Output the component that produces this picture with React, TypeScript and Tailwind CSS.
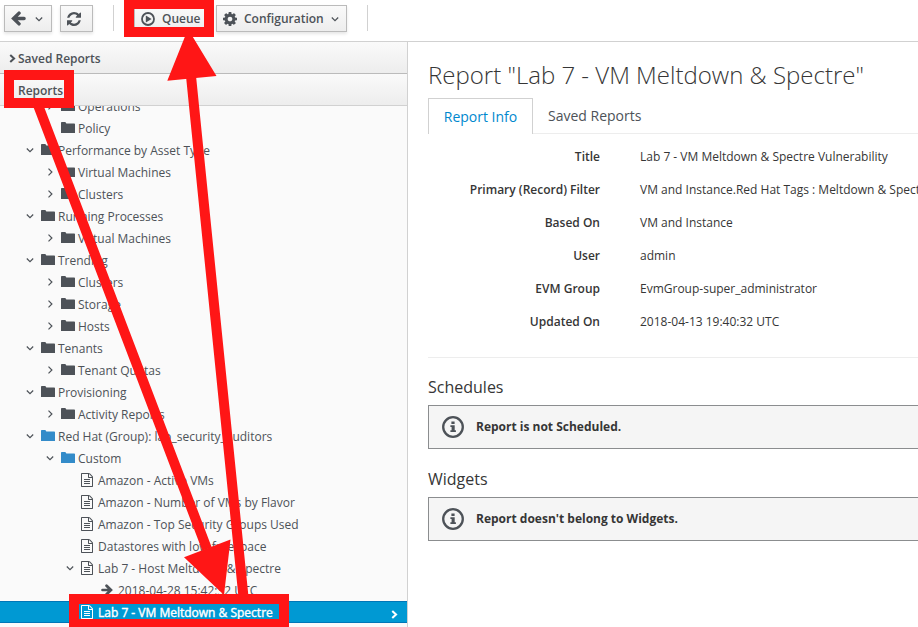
import React from "react";

type IconProps = { className?: string };

const ArrowIcon = ({ className = "" }: IconProps) => (
  <svg viewBox="0 0 14 14" className={className} fill="none" stroke="currentColor" strokeWidth="3.2" strokeLinecap="round" aria-hidden="true">
    <path d="M12.2 7H3M7.5 2L2.4 7l5.100 5" />
  </svg>
);

const RefreshIcon = ({ className = "" }: IconProps) => (
  <svg viewBox="128 128 1536 1536" className={className} fill="currentColor" aria-hidden="true">
    <path d="M1639 1056q0 5-1 7-64 268-268 434.5t-478 166.5q-146 0-282.5-55t-243.5-157l-129 129q-19 19-45 19t-45-19-19-45v-448q0-26 19-45t45-19h448q26 0 45 19t19 45-19 45l-137 137q71 66 161 102t187 36q134 0 250-65t186-179q11-17 53-117 8-23 30-23h192q13 0 22.5 9.5t9.5 22.5zm25-800v448q0 26-19 45t-45 19h-448q-26 0-45-19t-19-45 19-45l138-138q-148-137-349-137-134 0-250 65t-186 179q-11 17-53 117-8 23-30 23h-199q-13 0-22.5-9.5t-9.5-22.5v-7q65-268 270-434.5t480-166.5q146 0 284 55.5t245 156.5l130-129q19-19 45-19t45 19 19 45z" />
  </svg>
);

const GearIcon = ({ className = "" }: IconProps) => (
  <svg viewBox="128 128 1536 1536" className={className} fill="currentColor" aria-hidden="true">
    <path d="M1152 896q0-106-75-181t-181-75-181 75-75 181 75 181 181 75 181-75 75-181zm512-109v222q0 12-8 23t-20 13l-185 28q-19 54-39 91 35 50 107 138 10 12 10 25t-9 23q-27 37-99 108t-94 71q-12 0-26-9l-138-108q-44 23-91 38-16 136-29 186-7 28-36 28h-222q-14 0-24.5-8.5t-11.5-21.5l-28-184q-49-16-90-37l-141 107q-10 9-25 9-14 0-25-11-126-114-165-168-7-10-7-23 0-12 8-23 15-21 51-66.5t54-70.5q-27-50-41-99l-183-27q-13-2-21-12.5t-8-23.5v-222q0-12 8-23t19-13l186-28q14-46 39-92-40-57-107-138-10-12-10-24 0-10 9-23 26-36 98.5-107.5t94.5-71.5q13 0 26 10l138 107q44-23 91-38 16-136 29-186 7-28 36-28h222q14 0 24.5 8.5t11.5 21.5l28 184q49 16 90 37l142-107q9-9 24-9 13 0 25 10 129 119 165 170 7 8 7 22 0 12-8 23-15 21-51 66.5t-54 70.5q26 50 41 98l183 28q13 2 21 12.5t8 23.5z" />
  </svg>
);

const PlayCircleIcon = ({ className = "" }: IconProps) => (
  <svg viewBox="0 0 14 14" className={className} aria-hidden="true">
    <circle cx="7" cy="7" r="6" fill="none" stroke="currentColor" strokeWidth="1.8" />
    <path d="M4.8 3.6L10.6 7l-5.8 3.4z" fill="currentColor" />
  </svg>
);

const ChevronDown = ({ className = "" }: IconProps) => (
  <svg viewBox="0 0 8 8" className={className} fill="none" stroke="currentColor" strokeWidth="1.2" aria-hidden="true">
    <path d="M0.8 2.5L4 5.7l3.2-3.2" />
  </svg>
);

const ChevronRight = ({ className = "" }: IconProps) => (
  <svg viewBox="0 0 8 8" className={className} fill="none" stroke="currentColor" strokeWidth="1.2" aria-hidden="true">
    <path d="M2.5 0.6L5.9 4 2.5 7.4" />
  </svg>
);

const BoldChevronRight = ({ className = "" }: IconProps) => (
  <svg viewBox="0 0 8 8" className={className} fill="none" stroke="currentColor" strokeWidth="1.8" aria-hidden="true">
    <path d="M2 0.8L5.4 4 2 7.2" />
  </svg>
);

const FolderIcon = ({ className = "" }: IconProps) => (
  <svg viewBox="0 0 14 11" className={className} fill="currentColor" aria-hidden="true">
    <path d="M0 .8Q0 0 .8 0H4q.6 0 .8.5L5.3 1.500H13.200q.8 0 .8.8V11H0z" />
  </svg>
);

const FileIcon = ({ className = "" }: IconProps) => (
  <svg viewBox="128 0 1536 1792" className={className} fill="currentColor" aria-hidden="true">
    <path d="M1596 380q28 28 48 76t20 88v1152q0 40-28 68t-68 28h-1344q-40 0-68-28t-28-68v-1600q0-40 28-68t68-28h896q40 0 88 20t76 48zm-444-244v376h376q-10-29-22-41l-313-313q-12-12-41-22zm384 1528v-1024h-416q-40 0-68-28t-28-68v-416h-768v1536h1280zm-1024-864q0-14 9-23t23-9h704q14 0 23 9t9 23v64q0 14-9 23t-23 9h-704q-14 0-23-9t-9-23v-64zm736 224q14 0 23 9t9 23v64q0 14-9 23t-23 9h-704q-14 0-23-9t-9-23v-64q0-14 9-23t23-9h704zm0 256q14 0 23 9t9 23v64q0 14-9 23t-23 9h-704q-14 0-23-9t-9-23v-64q0-14 9-23t23-9h704z" />
  </svg>
);

const InfoIcon = ({ className = "" }: IconProps) => (
  <svg viewBox="0 0 22 22" className={className} aria-hidden="true">
    <circle cx="11" cy="11" r="9.8" fill="none" stroke="currentColor" strokeWidth="2.300" />
    <path d="M9.400 5.500h3.200v2.500h-3.200zM8.400 9.200h4.300v5.100h1.200v1.800H8.400v-1.800h1.200v-3.400H8.400z" fill="currentColor" />
  </svg>
);

type Kind = "folder" | "group" | "file" | "run";
type Node = { label: string; level: 1 | 2 | 3 | 4; kind: Kind; open?: boolean; selected?: boolean };

const nodes: Node[] = [
  { label: "Operations", level: 2, kind: "folder", open: false },
  { label: "Policy", level: 2, kind: "folder" },
  { label: "Performance by Asset Type", level: 1, kind: "folder", open: true },
  { label: "Virtual Machines", level: 2, kind: "folder", open: false },
  { label: "Clusters", level: 2, kind: "folder", open: false },
  { label: "Running Processes", level: 1, kind: "folder", open: true },
  { label: "Virtual Machines", level: 2, kind: "folder", open: false },
  { label: "Trending", level: 1, kind: "folder", open: true },
  { label: "Clusters", level: 2, kind: "folder", open: false },
  { label: "Storage", level: 2, kind: "folder", open: false },
  { label: "Hosts", level: 2, kind: "folder", open: false },
  { label: "Tenants", level: 1, kind: "folder", open: true },
  { label: "Tenant Quotas", level: 2, kind: "folder", open: false },
  { label: "Provisioning", level: 1, kind: "folder", open: true },
  { label: "Activity Reports", level: 2, kind: "folder", open: false },
  { label: "Red Hat (Group): lab_security_auditors", level: 1, kind: "group", open: true },
  { label: "Custom", level: 2, kind: "group", open: true },
  { label: "Amazon - Active VMs", level: 3, kind: "file" },
  { label: "Amazon - Number of VMs by Flavor", level: 3, kind: "file" },
  { label: "Amazon - Top Security Groups Used", level: 3, kind: "file" },
  { label: "Datastores with low freespace", level: 3, kind: "file" },
  { label: "Lab 7 - Host Meltdown & Spectre", level: 3, kind: "file", open: true },
  { label: "2018-04-28 15:42:32 UTC", level: 4, kind: "run" },
  { label: "Lab 7 - VM Meltdown & Spectre", level: 3, kind: "file", selected: true },
];

const indent = { 1: "pl-5", 2: "pl-10", 3: "pl-[60px]", 4: "pl-20" };

const NodeIcon = ({ kind }: { kind: Kind }) => {
  if (kind === "file") return <FileIcon className="h-[14px] w-3" />;
  if (kind === "run") return <ArrowIcon className="h-3 w-3 rotate-180" />;
  return <FolderIcon className={kind === "group" ? "mb-px h-[11px] w-[14px] text-[#338bc9]" : "mb-px h-[11px] w-[14px]"} />;
};

const TreeRow = ({ node }: { node: Node }) => (
  <li
    className={`flex h-[22px] items-center whitespace-nowrap ${indent[node.level]} ${
      node.selected
        ? "bg-[#0099d3] font-medium text-white shadow-[inset_0_1px_0_#0076b7,inset_0_-1px_0_#0076b7] [-webkit-text-stroke:0.4px_white]"
        : ""
    }`}
  >
    <span className="flex w-[21px] justify-center pr-px">
      {node.open === true && <ChevronDown className="h-2 w-2" />}
      {node.open === false && <ChevronRight className="h-2 w-2" />}
    </span>
    <span className="flex w-[17px]">
      <NodeIcon kind={node.kind} />
    </span>
    <span className="pt-[2px]">{node.label}</span>
    {node.selected && <BoldChevronRight className="mt-1 mr-2 ml-auto h-[9px] w-[9px]" />}
  </li>
);

const toolButton =
  "flex h-[27px] items-center border border-[#bbb] bg-linear-to-b from-[#fafafa] to-[#ededed] text-[12px] font-semibold text-[#4d5258] shadow-[0_2px_3px_rgba(3,3,3,0.1)]";

const Toolbar = () => (
  <header className="flex h-[41px] items-start pt-[5px] pl-1">
    <button type="button" aria-label="Back" className={`${toolButton} w-12 justify-between pr-2 pl-[6px]`}>
      <ArrowIcon className="h-[15px] w-[15px]" />
      <ChevronDown className="h-2 w-2" />
    </button>
    <button type="button" aria-label="Refresh" className={`${toolButton} ml-2 w-[33px] pl-[6px]`}>
      <RefreshIcon className="h-[14px] w-[14px]" />
    </button>
    <span className="ml-5 h-[26px] w-px bg-[#d1d1d1]" />
    <button type="button" className={`${toolButton} ml-5 w-[76px] gap-[7px] pl-[6px]`}>
      <PlayCircleIcon className="h-[14px] w-[14px]" />
      Queue
    </button>
    <button type="button" className={`${toolButton} ml-[6px] w-[131px] gap-[7px] pl-[6px]`}>
      <GearIcon className="h-[14px] w-[14px]" />
      Configuration
      <ChevronDown className="h-2 w-2" />
    </button>
    <span className="ml-5 h-[26px] w-px bg-[#d1d1d1]" />
  </header>
);

const accordion =
  "flex h-8 w-full shrink-0 items-center border-b bg-linear-to-b from-[#fafafa] to-[#ededed] pt-[2px] pl-2 text-[12px] font-semibold text-[#4d5258]";

const Sidebar = () => (
  <aside className="flex w-[408px] shrink-0 flex-col border-r border-[#d1d1d1] bg-[#fafafa]">
    <button type="button" className={`${accordion} gap-px border-[#bbb]`}>
      <BoldChevronRight className="h-[9px] w-[9px]" />
      Saved Reports
    </button>
    <button type="button" className={`${accordion} border-[#d1d1d1]`}>
      <span className="pl-[10px]">Reports</span>
    </button>
    <div className="overflow-hidden">
      <ul className="-mt-[11px] text-[12px] text-[#4d5258]">
        {nodes.map((node, i) => (
          <TreeRow key={i} node={node} />
        ))}
      </ul>
    </div>
  </aside>
);

const details = [
  ["Title", "Lab 7 - VM Meltdown & Spectre Vulnerability"],
  ["Primary (Record) Filter", "VM and Instance.Red Hat Tags : Meltdown & Spectre"],
  ["Based On", "VM and Instance"],
  ["User", "admin"],
  ["EVM Group", "EvmGroup-super_administrator"],
  ["Updated On", "2018-04-13 19:40:32 UTC"],
];

const Notice = ({ title, message }: { title: string; message: string }) => (
  <section className="pb-[18px]">
    <h2 className="h-[30px] text-[16px] leading-6">{title}</h2>
    <div className="flex h-11 items-center gap-3 border border-r-0 border-[#8b8d8f] bg-[#f5f5f5] pl-[13px] text-[12px] font-bold">
      <InfoIcon className="h-[22px] w-[22px] text-[#4d5258]" />
      {message}
    </div>
  </section>
);

const Report = () => (
  <main className="min-w-0 flex-1 overflow-hidden pt-[15px] pl-5 text-[#363636]">
    <h1 className="h-[41px] text-[24px] leading-9 font-light whitespace-nowrap">Report "Lab 7 - VM Meltdown &amp; Spectre"</h1>
    <nav className="flex h-9 border-b border-[#ededed] text-[14px] leading-[34px]">
      <button type="button" className="-mb-px w-[105px] border border-b-0 border-[#d1d1d1] bg-white text-[#0088ce]">
        Report Info
      </button>
      <button type="button" className="px-[15px] text-[#4d5258]">
        Saved Reports
      </button>
    </nav>
    <dl className="grid grid-cols-[172px_1fr] gap-x-10 border-b border-[#ededed] pt-[6px] pb-[19px] text-[12px] leading-[33px]">
      {details.map(([name, value]) => (
        <React.Fragment key={name}>
          <dt className="text-right font-semibold">{name}</dt>
          <dd className="whitespace-nowrap">{value}</dd>
        </React.Fragment>
      ))}
    </dl>
    <div className="pt-[17px]">
      <Notice title="Schedules" message="Report is not Scheduled." />
      <Notice title="Widgets" message="Report doesn't belong to Widgets." />
    </div>
  </main>
);

const Annotations = () => (
  <svg width="300" height="627" className="pointer-events-none absolute top-0 left-0" aria-hidden="true">
    <g fill="none" stroke="#ff1616" strokeWidth="10">
      <rect x="129" y="4" width="80" height="28" />
      <rect x="9" y="75" width="60" height="28" />
      <rect x="74" y="599" width="210" height="25" />
      <path d="M38 105L207 549M243.500 597L191 76" />
    </g>
    <path d="M224 595L184 557.300L230.500 539.500zM188 29L167.300 80.700L216.500 76z" fill="#ff1616" />
  </svg>
);

export default function App() {
  return (
    <div className="relative flex h-screen flex-col overflow-hidden bg-white font-['Open_Sans',sans-serif]">
      <Toolbar />
      <div className="flex min-h-0 flex-1 border-t border-[#d1d1d1]">
        <Sidebar />
        <Report />
      </div>
      <Annotations />
    </div>
  );
}
